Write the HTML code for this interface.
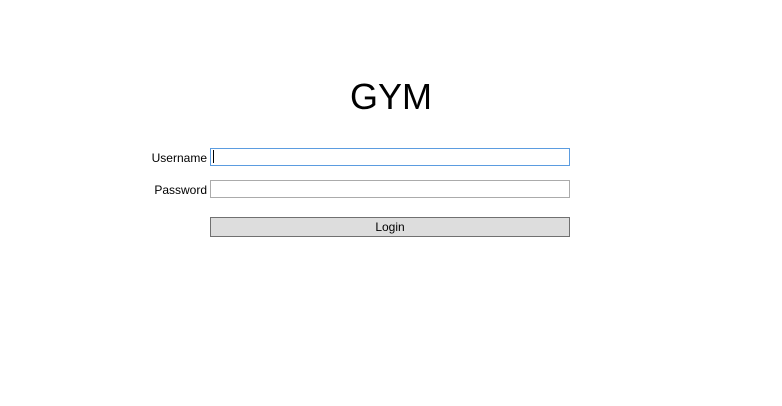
<!DOCTYPE html>
<html><head><style>
body{margin:0;width:782px;height:406px;background:#fff;position:relative;font-family:"Liberation Sans",sans-serif;overflow:hidden}
.t{position:absolute;left:0;width:782px;text-align:center;top:76px;font-size:36px;line-height:42px;color:#000}
.l{position:absolute;right:575px;font-size:12px;color:#000}
.b{position:absolute;left:210px;width:358px;box-sizing:content-box}
</style></head><body>
<div class="t">GYM</div>
<div class="l" style="top:151px">Username</div>
<div class="b" style="top:148px;height:16px;border:1px solid #5b9ce0"></div>
<div style="position:absolute;left:213px;top:150px;width:1px;height:13px;background:#000"></div>
<div class="l" style="top:183px">Password</div>
<div class="b" style="top:180px;height:16px;border:1px solid #ababab"></div>
<div class="b" style="top:217px;height:18px;border:1px solid #707070;background:#dddddd;text-align:center;font-size:12px;line-height:19px">Login</div>
</body></html>
